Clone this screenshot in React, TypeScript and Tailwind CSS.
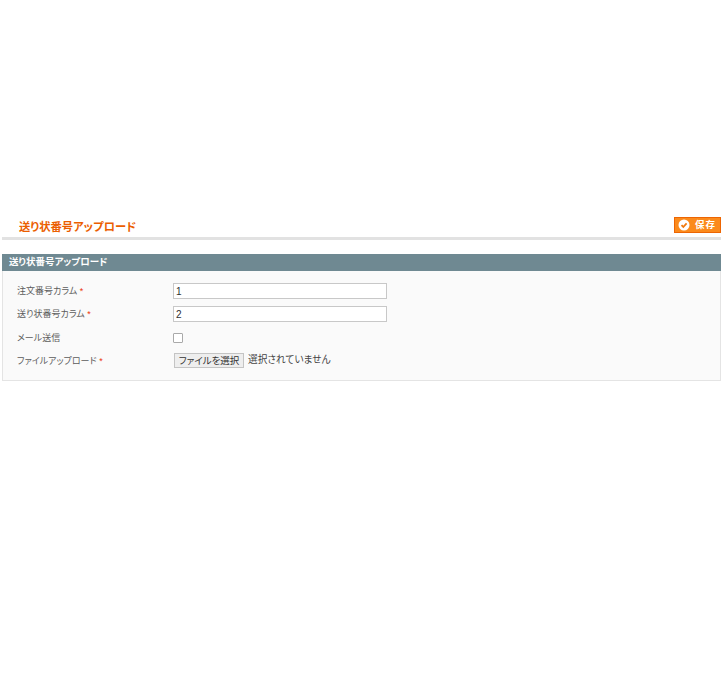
const font = { fontFamily: '"Liberation Sans", "Noto Sans CJK JP", sans-serif' };

function Label({ text, required }: { text: string; required?: boolean }) {
  return (
    <label className="w-[156px] shrink-0 text-[9px] leading-[14px] text-[#5c5c5c]">
      {text}
      {required && <span className="text-[#eb340a]"> *</span>}
    </label>
  );
}

export default function App() {
  return (
    <div style={font} className="min-h-[680px] bg-white pt-[216px] pr-[4px] pl-[2px] [font-feature-settings:'palt']">
      <div className="box-content flex h-[21px] items-start justify-between border-b-[3px] border-[#e2e2e2] pl-[17px]">
        <h3 className="pt-[4px] text-[11.3px] leading-[15px] font-bold text-[#eb5e00]">
          送り状番号アップロード
        </h3>
        <button
          type="button"
          className="mt-[1px] flex h-[16px] w-[47px] items-center gap-[5px] border border-[#ed6502] bg-[#fb8a1c] pl-[3px] text-[9.5px] leading-none font-bold tracking-[1px] text-white"
        >
          <svg width="12" height="12" viewBox="0 0 12 12">
            <circle cx="6" cy="6" r="5.5" fill="#ffffff" />
            <path d="M3.5 6.2 5.3 8 8.6 4.3" fill="none" stroke="#f07a10" strokeWidth="1.8" />
          </svg>
          保存
        </button>
      </div>

      <div className="mt-[14px] flex h-[17px] items-center bg-[#6f8992] pl-[7px] text-[9.5px] font-bold text-white">
        送り状番号アップロード
      </div>
      <div className="h-[110px] border border-t-0 border-[#e4e4e4] bg-[#fafafa] pt-[12px] pl-[14px]">
        <div className="flex h-[16px] items-center">
          <Label text="注文番号カラム" required />
          <input
            readOnly
            value="1"
            className="h-[16px] w-[214px] border border-[#c8c8c8] bg-white px-[2px] text-[10px] text-[#2f2f2f] outline-none"
          />
        </div>
        <div className="mt-[7px] flex h-[16px] items-center">
          <Label text="送り状番号カラム" required />
          <input
            readOnly
            value="2"
            className="h-[16px] w-[214px] border border-[#c8c8c8] bg-white px-[2px] text-[10px] text-[#2f2f2f] outline-none"
          />
        </div>
        <div className="mt-[11px] flex h-[10px] items-center">
          <Label text="メール送信" />
          <span className="h-[10px] w-[10px] rounded-[1px] border border-[#a9a9a9] bg-white" />
        </div>
        <div className="mt-[10px] flex h-[15px] items-center">
          <Label text="ファイルアップロード" required />
          <button
            type="button"
            className="ml-[1px] h-[15px] w-[70px] border border-[#c4c4c4] bg-[#eeeeee] text-[9.5px] leading-none whitespace-nowrap text-[#333333]"
          >
            ファイルを選択
          </button>
          <span className="ml-[4px] text-[9.7px] whitespace-nowrap text-[#444444]">選択されていません</span>
        </div>
      </div>
    </div>
  );
}
